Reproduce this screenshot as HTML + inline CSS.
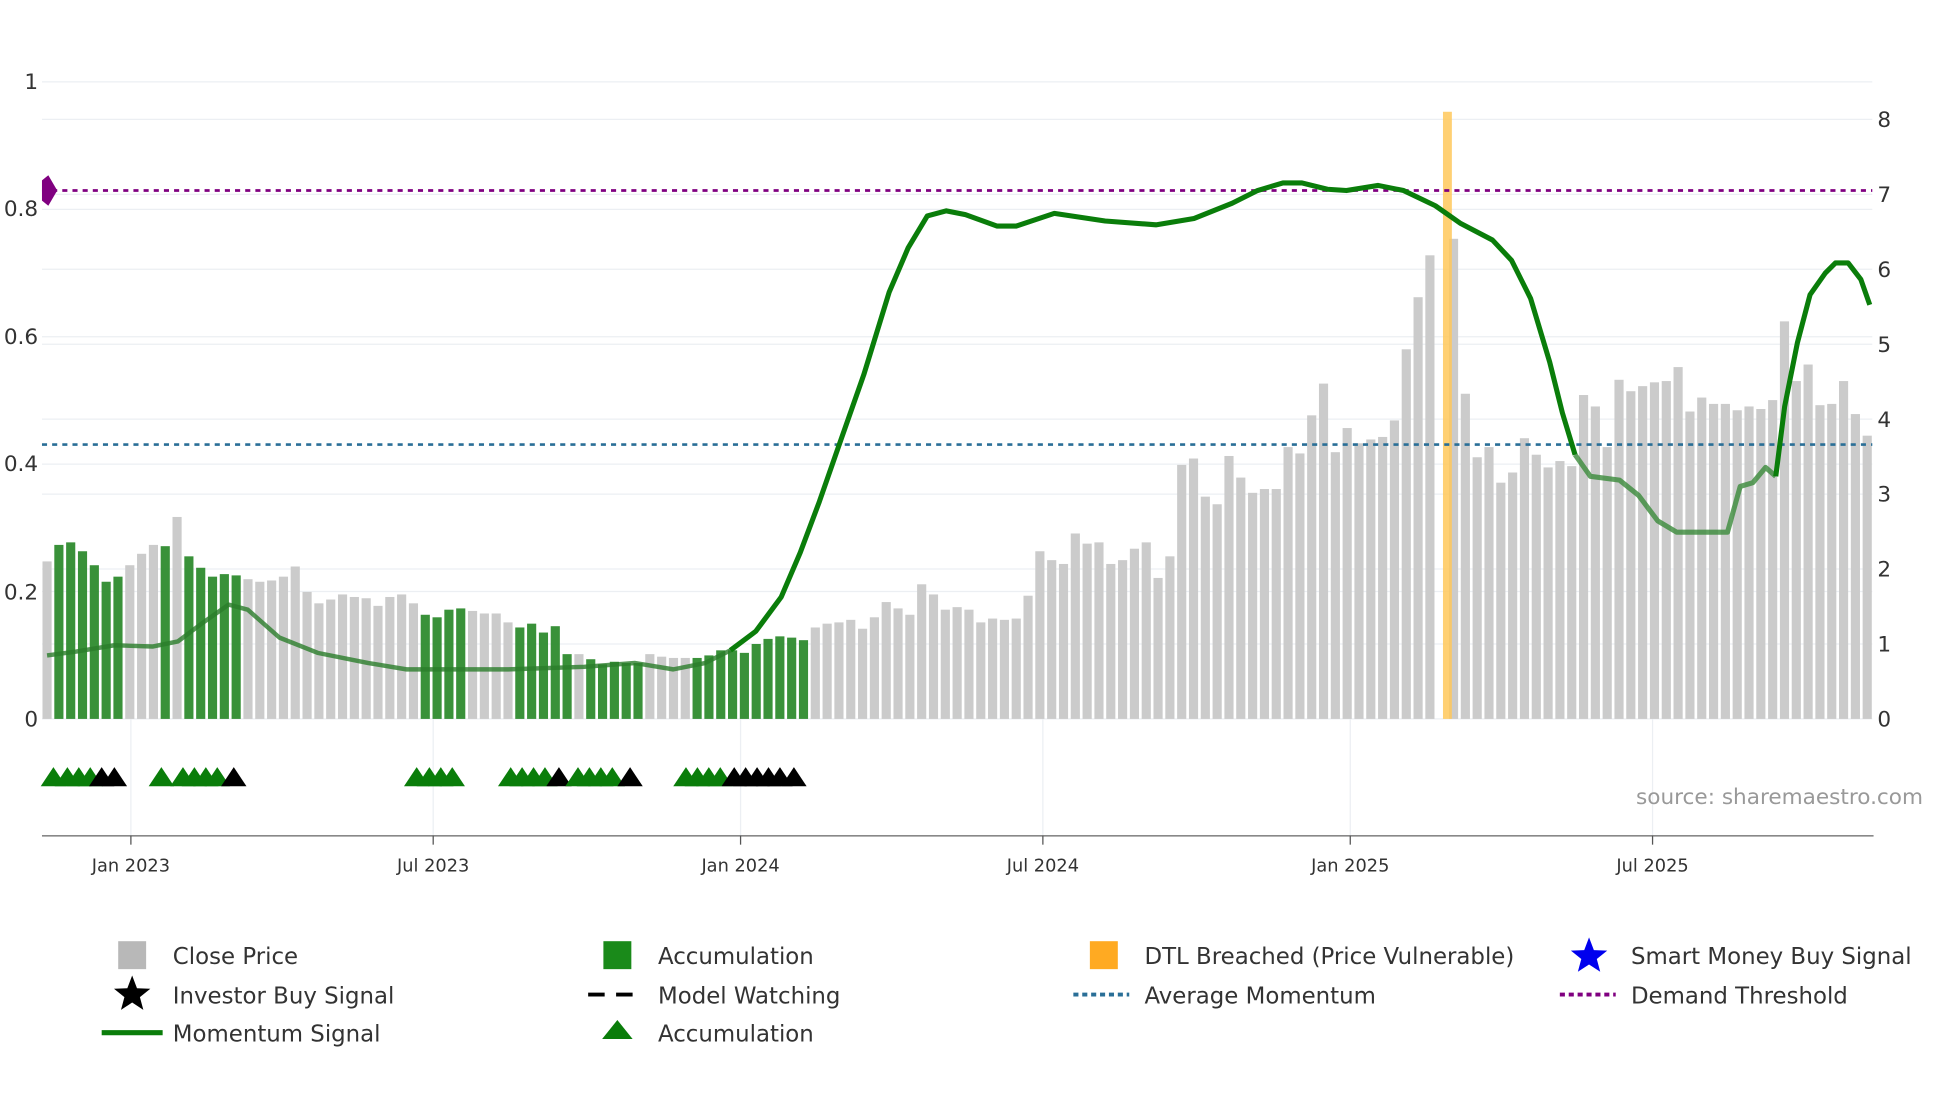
<!DOCTYPE html>
<html><head><meta charset="utf-8"><style>
html,body{margin:0;padding:0;background:#fff;}
svg{display:block;font-family:"DejaVu Sans","Liberation Sans",sans-serif;}
</style></head><body>
<svg id="s" width="1960" height="1102" viewBox="0 0 1543 867.6" xmlns="http://www.w3.org/2000/svg">
<rect width="1543" height="868" fill="#fff"/>
<g id="grid" stroke="#eceff3" stroke-width="1"></g>
<g id="bars"></g>
<rect x="1136" y="88" width="7" height="478" fill="#ffc85a" opacity="0.85"/>
<line x1="33" y1="150" x2="1474" y2="150" stroke="#800080" stroke-width="2.2" stroke-dasharray="4,4"/>
<line x1="33" y1="350" x2="1474" y2="350" stroke="#2a6f97" stroke-width="2" stroke-dasharray="4,4"/>
<path d="M33 142 L38 138 L45 150 L38 162 L33 158 Z" fill="#800080"/>
<g id="mom"></g>
<g id="tri"></g>
<line x1="33" y1="658" x2="1475" y2="658" stroke="#888" stroke-width="1.3"/>
<g font-size="14" fill="#333" text-anchor="middle">
<line x1="103" y1="658" x2="103" y2="665" stroke="#555"/><text x="103" y="686">Jan 2023</text>
<line x1="341" y1="658" x2="341" y2="665" stroke="#555"/><text x="341" y="686">Jul 2023</text>
<line x1="583" y1="658" x2="583" y2="665" stroke="#555"/><text x="583" y="686">Jan 2024</text>
<line x1="821" y1="658" x2="821" y2="665" stroke="#555"/><text x="821" y="686">Jul 2024</text>
<line x1="1063" y1="658" x2="1063" y2="665" stroke="#555"/><text x="1063" y="686">Jan 2025</text>
<line x1="1301" y1="658" x2="1301" y2="665" stroke="#555"/><text x="1301" y="686">Jul 2025</text>
</g>
<g font-size="17" fill="#333" text-anchor="end">
<text x="30" y="70">1</text><text x="30" y="170">0.8</text><text x="30" y="271">0.6</text>
<text x="30" y="371">0.4</text><text x="30" y="472">0.2</text><text x="30" y="572">0</text>
</g>
<g id="ry" font-size="17" fill="#333"></g>
<text x="1288" y="633" font-size="17" fill="#999">source: sharemaestro.com</text>
<g font-size="18" fill="#333">
<rect x="93" y="741" width="22" height="22" fill="#b8b8b8"/><text x="136" y="759">Close Price</text>
<rect x="475" y="741" width="22" height="22" fill="#1a8a1a"/><text x="518" y="759">Accumulation</text>
<rect x="858" y="741" width="22" height="22" fill="#ffaa22"/><text x="901" y="759">DTL Breached (Price Vulnerable)</text>
<path d="M0,-15 L3.8,-5 L14.3,-4.6 L6.1,2 L8.8,12.1 L0,6.3 L-8.8,12.1 L-6.1,2 L-14.3,-4.6 L-3.8,-5 Z" transform="translate(1251,753)" fill="#0000ee"/>
<text x="1284" y="759">Smart Money Buy Signal</text>
<path d="M0,-15 L3.8,-5 L14.3,-4.6 L6.1,2 L8.8,12.1 L0,6.3 L-8.8,12.1 L-6.1,2 L-14.3,-4.6 L-3.8,-5 Z" transform="translate(104,783)" fill="#000"/>
<text x="136" y="790">Investor Buy Signal</text>
<line x1="463" y1="783" x2="507" y2="783" stroke="#000" stroke-width="3" stroke-dasharray="13,9"/><text x="518" y="790">Model Watching</text>
<line x1="845" y1="783" x2="889" y2="783" stroke="#2a6f97" stroke-width="3" stroke-dasharray="4,3"/><text x="901" y="790">Average Momentum</text>
<line x1="1228" y1="783" x2="1272" y2="783" stroke="#800080" stroke-width="3" stroke-dasharray="4,3"/><text x="1284" y="790">Demand Threshold</text>
<line x1="80" y1="813" x2="128" y2="813" stroke="#0a7d0a" stroke-width="4"/><text x="136" y="820">Momentum Signal</text>
<path d="M474 818 L486 803 L498 818 Z" fill="#0a7d0a"/><text x="518" y="820">Accumulation</text>
</g>
</svg>
<script>
var NS="http://www.w3.org/2000/svg";
function el(t,a,p){var e=document.createElementNS(NS,t);for(var k in a)e.setAttribute(k,a[k]);document.getElementById(p).appendChild(e);return e;}
for(var k=0;k<=8;k++){var y=566-59*k;el('line',{x1:33,y1:y,x2:1474,y2:y},'grid');var t=el('text',{x:1478,y:y+6},'ry');t.textContent=k;}
for(var k=1;k<=5;k++){var y=566-100.3*k;el('line',{x1:33,y1:y,x2:1474,y2:y},'grid');}
[103,341,583,821,1063,1301].forEach(function(x){el('line',{x1:x,y1:566,x2:x,y2:658},'grid');});
var d="g442 G429 G427 G434 G445 G458 G454 g445 g436 g429 G430 g407 G438 G447 G454 G452 G453 g456 g458 g457 g454 g446 g466 g475 g472 g468 g470 g471 g477 g470 g468 g475 G484 G486 G480 G479 g481 g483 g483 g490 G494 G491 G498 G493 G515 g515 G519 G523 G521 G522 G522 g515 g517 g518 g518 G518 G516 G512 G512 G514 G507 G503 G501 G502 G504 g494 g491 g490 g488 g495 g486 g474 g479 g484 g460 g468 g480 g478 g480 g490 g487 g488 g487 g469 g434 g441 g444 g420 g428 g427 g444 g441 g432 g427 g455 g438 g366 g361 g391 g397 g359 g376 g388 g385 g385 g352 g357 g327 g302 g356 g337 g349 g346 g344 g331 g275 g234 g201 g223 g188 g310 g360 g352 g380 g372 g345 g358 g368 g363 g367 g311 g320 g352 g299 g308 g304 g301 g300 g289 g324 g313 g318 g318 g323 g320 g322 g315 g253 g300 g287 g319 g318 g300 g326 g343".split(" ");
var N=d.length,sp=(1470-37)/(N-1);
d.forEach(function(s,i){var x=37+i*sp,y=+s.slice(1);
 if(Math.abs(x-1139)<4)return;
 el('rect',{x:x-3.6,y:y,width:7.2,height:566-y,fill:s[0]=='G'?'#2e8b2e':'#cbcbcb',opacity:s[0]=='G'?0.95:1},'bars');});
var P=[[37,516],[60,513],[90,508],[120,509],[140,505],[160,490],[180,476],[195,480],[220,502],[250,514],[290,522],[320,527],[400,527],[460,525],[500,522],[530,527],[555,522],[575,512],[595,497],[615,470],[630,435],[645,395],[660,352],[680,295],[700,230],[715,195],[730,170],[745,166],[760,169],[785,178],[800,178],[830,168],[870,174],[910,177],[940,172],[970,160],[990,150],[1010,144],[1025,144],[1045,149],[1060,150],[1085,146],[1105,150],[1130,162],[1150,176],[1175,189],[1190,205],[1205,235],[1220,285],[1230,325],[1240,358],[1252,375],[1275,378],[1290,390],[1305,410],[1320,419],[1360,419],[1370,383],[1380,380],[1390,368],[1398,375],[1405,320],[1415,270],[1425,232],[1437,215],[1445,207],[1455,207],[1465,220],[1472,240]];
function path(a){return "M"+a.map(function(p){return p[0]+" "+p[1];}).join(" L");}
var i1=P.findIndex(function(p){return p[0]>=575;}),i2=P.findIndex(function(p){return p[0]>=1240;}),i3=P.findIndex(function(p){return p[0]>=1398;});
el('path',{d:path(P.slice(0,i1+1)),fill:'none',stroke:'#2a7d2a',"stroke-width":3.5,opacity:0.8,"stroke-linejoin":"round"},'mom');
el('path',{d:path(P.slice(i1,i2+1)),fill:'none',stroke:'#0a7d0a',"stroke-width":4,"stroke-linejoin":"round"},'mom');
el('path',{d:path(P.slice(i2,i3+1)),fill:'none',stroke:'#3a8a3a',"stroke-width":4,opacity:0.8,"stroke-linejoin":"round"},'mom');
el('path',{d:path(P.slice(i3)),fill:'none',stroke:'#0a7d0a',"stroke-width":4,"stroke-linejoin":"round"},'mom');
var T=[[42,'g'],[53,'g'],[62,'g'],[71,'g'],[80,'k'],[90,'k'],[127,'g'],[144,'g'],[153,'g'],[162,'g'],[171,'g'],[184,'k'],[328,'g'],[338,'g'],[347,'g'],[356,'g'],[402,'g'],[411,'g'],[420,'g'],[429,'g'],[440,'k'],[455,'g'],[464,'g'],[473,'g'],[482,'g'],[496,'k'],[540,'g'],[549,'g'],[558,'g'],[567,'g'],[578,'k'],[587,'k'],[596,'k'],[605,'k'],[614,'k'],[625,'k']];
T.forEach(function(t){el('path',{d:"M"+(t[0]-10)+" 619 L"+t[0]+" 604 L"+(t[0]+10)+" 619 Z",fill:t[1]=='g'?'#0a7d0a':'#000'},'tri');});
</script>
</body></html>
